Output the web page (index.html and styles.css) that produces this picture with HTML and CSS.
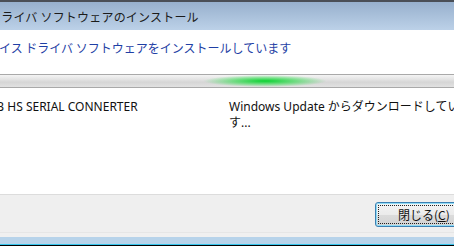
FILE: index.html
```html
<!DOCTYPE html>
<html lang="ja">
<head>
    <meta charset="UTF-8">
    <title>ドライバ ソフトウェアのインストール</title>
    <link rel="stylesheet" href="styles.css">
</head>
<body>
    <div class="window">
        <div class="titlebar">
            <p class="title">ドライバ ソフトウェアのインストール</p>
        </div>
        <div class="content">
            <p class="instruction">デバイス ドライバ ソフトウェアをインストールしています</p>
            <div class="progress">
                <div class="glow"></div>
            </div>
            <div class="devices">
                <div class="row">
                    <p class="devname">USB HS SERIAL CONNERTER</p>
                    <p class="status">Windows Update からダウンロードしています...</p>
                </div>
            </div>
        </div>
        <div class="footer">
            <button class="btn">閉じる(<u>C</u>)</button>
        </div>
        <div class="frame"></div>
    </div>
</body>
</html>
```

FILE: styles.css
```css
body{
    margin: 0;
    width: 454px;
    height: 246px;
    overflow: hidden;
    font-family: "Noto Sans CJK JP", "Noto Sans", sans-serif;
    font-size: 12px;
}
p{
    margin: 0;
    white-space: nowrap;
}
.window{
    width: 454px;
    height: 246px;
    display: flex;
    flex-direction: column;
    overflow: hidden;
    background-color: #fff;
}
.titlebar{
    height: 27px;
    border-top: 2px solid #4a4f57;
    background: linear-gradient(#97b0cd, #bcd1e8);
    display: flex;
    align-items: center;
    padding-top: 1px;
}
.title{
    margin-left: -11px;
    color: #1b1b1b;
    line-height: 14px;
    letter-spacing: 0.2px;
}
.content{
    flex: 1;
    background-color: #fff;
}
.instruction{
    margin: 11px 0 0 -25px;
    color: #1f3fa5;
    line-height: 14px;
    height: 33px;
}
.progress{
    height: 12px;
    border-top: 1px solid #a9a9a9;
    border-bottom: 1px solid #a9a9a9;
    background: linear-gradient(#f4f4f4, #e4e4e4 35%, #d6d6d6 60%, #e2e2e2);
    position: relative;
    overflow: hidden;
}
.glow{
    position: absolute;
    left: 203px;
    top: 0;
    width: 124px;
    height: 12px;
    background: radial-gradient(ellipse at center, rgba(0,210,40,0.95) 0%, rgba(40,220,70,0.6) 35%, rgba(120,230,130,0) 70%);
}
.devices{
    padding-top: 11px;
}
.row{
    display: flex;
    line-height: 16px;
    font-family: "Noto Sans", "Noto Sans CJK JP", sans-serif;
}
.devname{
    width: 248px;
    flex-shrink: 0;
    margin-left: -19px;
    color: #111;
}
.status{
    width: 262px;
    flex-shrink: 0;
    white-space: normal;
    color: #111;
}
.footer{
    height: 38px;
    border-top: 1px solid #dcdcdc;
    background-color: #efefef;
    display: flex;
    justify-content: flex-end;
    align-items: flex-start;
    padding-top: 7px;
    box-sizing: border-box;
    flex-shrink: 0;
}
.btn{
    width: 95px;
    height: 25px;
    margin-right: -16px;
    font-family: "Noto Sans CJK JP", sans-serif;
    font-size: 12px;
    color: #111;
    border: 1px solid #3c7fb1;
    border-radius: 3px;
    background: linear-gradient(#f4f4f4, #ebebeb 50%, #dcdcdc 51%, #d2d2d2);
    box-shadow: inset 0 0 0 1px #8fdcf7;
    outline: 1px dotted #222;
    outline-offset: -4px;
    padding: 0 0 0 6px;
    text-align: left;
    text-indent: 16px;
}
.frame{
    height: 13px;
    flex-shrink: 0;
    border-top: 1px solid #e6e6e6;
    background: linear-gradient(#f0f0f0 0, #f0f0f0 4px, #b7d3ea 4px, #b7d3ea 11px, #35c5ec 11px, #35c5ec 12px, #000 12px);
}
```
